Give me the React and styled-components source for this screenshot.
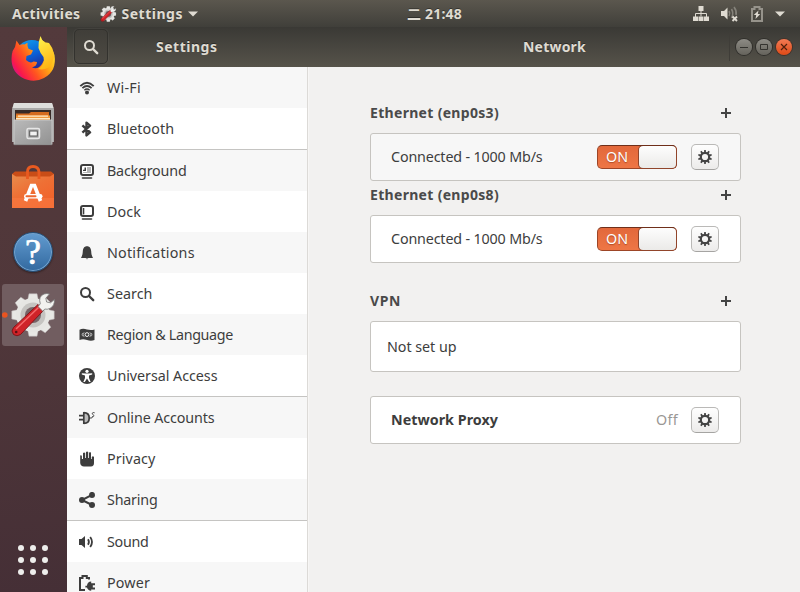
import React, { useLayoutEffect, useRef, useState } from "react";
import styled, { createGlobalStyle, css } from "styled-components";

const Global = createGlobalStyle`
  * { box-sizing: border-box; }
  html, body { margin: 0; padding: 0; overflow: hidden; }
  body { font-family: "Noto Sans", "Noto Sans CJK SC", sans-serif; font-size: 14.3px; color: #3d3d3d; }
`;

/* ---------- text with a set measure ---------- */
const Label = styled.span`
  display: inline-block;
  white-space: pre;
  line-height: 20px;
  flex: none;
`;

function Text({ width, children }) {
  const ref = useRef(null);
  const [spacing, setSpacing] = useState(0);
  useLayoutEffect(() => {
    const natural = ref.current.getBoundingClientRect().width;
    setSpacing((width - natural) / children.length);
  }, []);
  return (
    <Label ref={ref} style={{ letterSpacing: `${spacing}px` }}>
      {children}
    </Label>
  );
}

/* ---------- shell ---------- */
const Screen = styled.div`
  width: 800px;
  height: 592px;
  display: flex;
  flex-direction: column;
  overflow: hidden;
  background: #f2f1f0;
`;
const TopBar = styled.div`
  height: 27px;
  flex: none;
  display: grid;
  grid-template-columns: 395px auto 1fr;
  align-items: center;
  padding: 1px 12px 0 12px;
  background: linear-gradient(#5b574e, #403f3a);
  color: #dfdbd2;
  font-weight: 700;
  font-size: 14px;
  text-shadow: 0 -1px 0 rgba(0, 0, 0, 0.35);
`;
const BarSide = styled.div`
  display: flex;
  align-items: center;
  justify-content: ${(p) => (p.$end ? "flex-end" : "flex-start")};
`;
const AppMenu = styled.div`
  display: flex;
  align-items: center;
  margin-left: 19px;
  gap: 5px;
`;
const TrayIcons = styled.div`
  display: flex;
  align-items: center;
  gap: 12px;
  margin-right: 3px;
  svg { display: block; }
`;
const Body = styled.div`
  flex: 1;
  display: flex;
  min-height: 0;
`;
const Dock = styled.div`
  width: 67px;
  flex: none;
  display: flex;
  flex-direction: column;
  gap: 2px;
  padding: 1px 3px 0 2px;
  background: linear-gradient(175deg, #533a3c 0%, #50373a 50%, #452f36 100%);
`;
const DockItem = styled.div`
  height: 62px;
  flex: none;
  display: flex;
  border-radius: 3px;
  background: ${(p) => (p.$active ? "#715d60" : "transparent")};
  svg { display: block; overflow: visible; }
`;
const AppGrid = styled.div`
  margin: auto 0 17px 16px;
  display: grid;
  grid-template-columns: repeat(3, 6px);
  gap: 6px;
`;
const GridDot = styled.span`
  width: 6px;
  height: 6px;
  border-radius: 50%;
  background: #eeeeec;
`;

/* ---------- window ---------- */
const Window = styled.div`
  flex: 1;
  display: flex;
  flex-direction: column;
  min-width: 0;
`;
const HeaderBar = styled.div`
  height: 40px;
  flex: none;
  display: flex;
  padding-bottom: 1px;
  background: linear-gradient(#3a3935, #56534a);
  color: #dfdbd2;
  font-weight: 700;
  font-size: 14px;
  text-shadow: 0 -1px 0 rgba(0, 0, 0, 0.4);
`;
const HeaderLeft = styled.div`
  width: 241px;
  display: flex;
  align-items: center;
  padding-left: 7px;
`;
const SearchButton = styled.div`
  width: 34px;
  height: 35px;
  margin-right: 48px;
  display: flex;
  align-items: center;
  justify-content: center;
  border: 1px solid #33322e;
  border-radius: 5px;
  background: linear-gradient(#403e39, #4d4a43);
  box-shadow: 0 0 0 1px rgba(255, 255, 255, 0.04);
`;
const HeaderRight = styled.div`
  flex: 1;
  display: flex;
  align-items: center;
  padding-left: 215px;
`;
const WindowControls = styled.div`
  margin-left: auto;
  height: 28px;
  display: flex;
  align-items: center;
  gap: 4px;
  padding: 0 8px 0 6px;
  border-left: 1px solid #3f3d38;
`;
const ControlButton = styled.span`
  width: 16px;
  height: 16px;
  border-radius: 50%;
  display: flex;
  box-shadow: 0 0 0 1px ${(p) => (p.$close ? "#443229" : "#302f2b")};
  background: ${(p) =>
    p.$close ? "linear-gradient(#f37a54, #df4a16)" : "linear-gradient(#8d8b85, #65635c)"};
  svg { display: block; }
`;
const Panes = styled.div`
  flex: 1;
  display: flex;
  min-height: 0;
`;
const Sidebar = styled.div`
  width: 241px;
  flex: none;
  overflow: hidden;
  background: #fff;
  border-right: 1px solid #dcdad7;
`;
const SidebarRow = styled.div`
  height: 41px;
  display: flex;
  align-items: center;
  gap: 12px;
  padding: 1px 0 0 12px;
  background: ${(p) => (p.$shaded ? "#f7f7f7" : "#fff")};
  svg { display: block; flex: none; margin-top: -1px; }
  ${(p) =>
    p.$separated &&
    css`
      height: 42px;
      border-top: 1px solid #c5c4c2;
    `}
`;
const Content = styled.div`
  flex: 1;
  padding: 36px 59px 0 61px;
  border-left: 1px solid #f7f6f5;
  background: #f2f1f0;
`;
const Section = styled.section`
  margin-bottom: ${(p) => p.$gap}px;
`;
const SectionHead = styled.div`
  height: 20px;
  display: flex;
  align-items: center;
  justify-content: space-between;
  padding-right: 10px;
  margin-bottom: ${(p) => p.$gap}px;
  color: #4a4a4a;
  font-weight: 700;
  font-size: 14px;
  svg { display: block; }
`;
const Card = styled.div`
  height: ${(p) => p.$height || 48}px;
  display: flex;
  align-items: center;
  padding: 0 21px 0 ${(p) => p.$inset || 20}px;
  border: 1px solid #c6c4c0;
  border-radius: 3px;
  background: ${(p) => (p.$shaded ? "#f7f7f7" : "#fff")};
  font-weight: ${(p) => (p.$strong ? 700 : 400)};
`;
const CardEnd = styled.div`
  margin-left: auto;
  display: flex;
  align-items: center;
  gap: ${(p) => p.$gap}px;
`;
const Muted = styled.span`
  color: #9a9794;
  font-weight: 400;
`;
const Toggle = styled.div`
  width: 80px;
  height: 24px;
  display: flex;
  justify-content: space-between;
  align-items: center;
  padding-left: 8px;
  border: 1px solid #9d4526;
  border-top-color: #6f2f1a;
  border-radius: 5px;
  background: linear-gradient(#e2683b, #ee7645);
  color: #fff;
  text-shadow: 0 1px 1px rgba(120, 40, 10, 0.5);
`;
const Knob = styled.span`
  width: 39px;
  height: 24px;
  margin: -1px;
  border: 1px solid #91452b;
  border-top-color: #6f2f1a;
  border-radius: 5px;
  background: linear-gradient(#fdfdfd, #ebeae8);
`;
const GearButton = styled.div`
  width: 28px;
  height: 26px;
  display: flex;
  align-items: center;
  justify-content: center;
  border: 1px solid #bab9b7;
  border-bottom-color: #a5a4a2;
  border-radius: 5px;
  background: linear-gradient(#fefefe, #ecebea);
`;

/* ---------- icons ---------- */
const Sym = ({ size = 16, children, ...rest }) => (
  <svg width={size} height={size} viewBox="0 0 16 16" fill="#3d3d3d" {...rest}>
    {children}
  </svg>
);
const stroke = (w, c = "#3d3d3d") => ({ fill: "none", stroke: c, strokeWidth: w });

const SearchIcon = ({ color = "#3d3d3d" }) => (
  <Sym>
    <circle cx="6.5" cy="6.5" r="4.5" {...stroke(2, color)} />
    <path d="M10 10L14.2 14.2" strokeLinecap="round" {...stroke(2.4, color)} />
  </Sym>
);
const icons = {
  wifi: (
    <Sym>
      <path d="M1.3 6.1Q8 -.5 14.7 6.1" {...stroke(2)} />
      <path d="M3.4 8.2Q8 3.9 12.6 8.2" {...stroke(1.8)} />
      <path d="M5.4 10.2Q8 7.8 10.6 10.2" {...stroke(1.5)} />
      <circle cx="8" cy="12.6" r="2" />
    </Sym>
  ),
  bluetooth: (
    <Sym>
      <path d="M3.4 4.4L11 11.4L7.5 14.4V1.6L11 4.6L3.4 11.6" strokeLinejoin="round" {...stroke(2.4)} />
    </Sym>
  ),
  background: (
    <Sym>
      <rect x="2" y="2" width="12" height="10" rx="2" fill="#fff" stroke="#3d3d3d" strokeWidth="2" />
      <path d="M8 4h4v6H4V9h4z" fill="#b5b5b5" />
      <path d="M7 4.5V8H4V6.8H5.5V4.5z" />
      <path d="M3.5 15h9" strokeLinecap="round" {...stroke(1.6)} />
    </Sym>
  ),
  dock: (
    <Sym>
      <rect x="2" y="2" width="12" height="10" rx="2" fill="#fff" stroke="#3d3d3d" strokeWidth="2" />
      <path d="M4.5 4v6.4" {...stroke(1.6)} />
      <path d="M3.5 15h9" strokeLinecap="round" {...stroke(1.6)} />
    </Sym>
  ),
  bell: (
    <Sym>
      <path d="M8 1.2C5.1 1.2 4 3.5 3.8 6.2C3.6 9.3 3.2 11 2 13H14C12.8 11 12.4 9.3 12.2 6.2C12 3.5 10.9 1.2 8 1.2Z" />
      <path d="M6.6 13.6h2.8Q8 15 6.6 13.6z" />
    </Sym>
  ),
  search: <SearchIcon />,
  region: (
    <Sym>
      <path d="M.5 2.7Q4 1 8 2.6Q12 3.6 15.5 2.5V13Q12 14.5 8 13Q4 11.5 .5 13Z" />
      <circle cx="8" cy="7.6" r="1.9" {...stroke(1, "#f2f2f2")} />
      <path d="M5.2 5.2Q3 7.6 5.2 10M10.8 5.2Q13 7.6 10.8 10M3.6 6Q2.6 7.6 3.6 9.2M12.4 6Q13.4 7.6 12.4 9.2" {...stroke(0.7, "#d0d0d0")} />
    </Sym>
  ),
  access: (
    <Sym>
      <circle cx="8" cy="8" r="8" />
      <circle cx="8" cy="3.3" r="1.6" fill="#fff" />
      <path d="M2.8 5.2L6.5 5.6H9.5L13.2 5.2V6.5L10 7.4V10L11.7 14H10.2L8 10.4L5.8 14H4.3L6 10V7.4L2.8 6.5Z" fill="#fff" />
    </Sym>
  ),
  accounts: (
    <Sym>
      <path d="M4.8 2.2C8.4 2.2 10.7 4.6 10.7 8S8.4 13.8 4.8 13.8Z" fill="#bbb" />
      <path d="M4.8 2V14M4.8 2.6C8.2 2.6 10.2 4.8 10.2 8S8.2 13.4 4.8 13.4M0 5.7H4.8M0 9.7H4.8" {...stroke(1.7)} />
      <path d="M10.5 8h1.8q1 0 1-1.2M15.6 2.8C13.4 2 12.6 3.5 14 4.6C15.4 5.6 15 7 13 6.8" {...stroke(1)} />
    </Sym>
  ),
  privacy: (
    <Sym>
      <path d="M1.2 4.5Q2.7 3.8 2.9 5.4V8H4V2Q5.2 1 6.2 2V7H7V1Q8.1 0 9.2 1V7H10V1.6Q11.1 .7 12 1.6V8H12.8V6Q14 4.7 15 6V12Q15 15.4 12 15.4H5Q1.6 15.4 1.2 12Z" />
    </Sym>
  ),
  sharing: (
    <Sym>
      <path d="M13 2.9L3 8L13 13" {...stroke(2)} />
      <circle cx="13" cy="2.9" r="3" />
      <circle cx="3" cy="8" r="3" />
      <circle cx="13" cy="13" r="3" />
    </Sym>
  ),
  sound: (
    <Sym>
      <path d="M0 5H2.5L6 2V14L2.5 11H0Z" />
      <path d="M9 5.3Q10.8 8 9 10.7M11.2 3Q14.8 8 11.2 13" {...stroke(1.8)} />
    </Sym>
  ),
  power: (
    <Sym>
      <path d="M6 15H1V3H3.5V1H7.8V3H10V4.5" {...stroke(2)} />
      <path d="M8 10.7Q8.2 6.8 12.2 6.6V8.2H16V10.2H13.8V12.5H16V14.4H12.2V15.8Q8.8 15.7 8 12.6H6.4V10.7Z" />
    </Sym>
  ),
};

const GearIcon = () => (
  <Sym fill="#444">
    <circle cx="8" cy="8" r="4.2" {...stroke(2.2, "#444")} />
    {[0, 36, 72, 108, 144, 180, 216, 252, 288, 324].map((a) => (
      <path key={a} d="M7 4.2L7.2 1H8.8L9 4.2Z" transform={`rotate(${a} 8 8)`} />
    ))}
  </Sym>
);
const PlusIcon = () => (
  <svg width="10" height="10" viewBox="0 0 10 10">
    <path d="M5 0V10M0 5H10" {...stroke(2, "#444")} />
  </svg>
);
const CaretIcon = () => (
  <svg width="10" height="6" viewBox="0 0 10 6">
    <path d="M0 .5H10L5 5.5Z" fill="#dfdbd2" />
  </svg>
);

const teeth = [0, 45, 90, 135, 180, 225, 270, 315];
const ToolArt = () => (
  <>
    {teeth.map((a) => (
      <path key={a} d="M25.6 16.5L27 9.8H35L36.4 16.5Z" transform={`rotate(${a} 31 31)`} fill="#e8e8e5" stroke="#bdb9b8" strokeWidth=".5" />
    ))}
    <circle cx="31" cy="31" r="17" fill="#e6e6e3" />
    <circle cx="31" cy="31" r="12.5" fill="#c5c4c1" />
    <circle cx="31" cy="31" r="8" fill="#776568" />
    <path d="M11.5 43.5L36 20.5L41.5 26.5L18.5 50.5Q15 53 11.5 50.5Q8.5 47 11.5 43.5Z" fill="#cf2328" stroke="#7a1115" strokeWidth=".9" />
    <path d="M14 45L36.5 23.5" stroke="#f4696a" strokeWidth="1.5" fill="none" />
    <circle cx="14.2" cy="48" r="1.3" fill="#591013" />
    <path d="M36 22.5L38.3 19.8Q36 12.5 42 10Q45 9 47.5 10L43.8 14.2L44.6 18L48.5 18.8L52.4 15.5Q53 21.5 48 24.4Q45 25.8 42.8 25L40.8 27.2Z" fill="#f2f2ef" stroke="#777" strokeWidth=".8" />
  </>
);

const HelpDisc = styled.span`
  width: 40px;
  height: 40px;
  margin: 12px auto 0;
  border-radius: 50%;
  border: 1px solid #275078;
  box-shadow: inset 0 0 0 1px #76a4ce, 0 1px 2px rgba(0, 0, 0, 0.4);
  background: linear-gradient(#629bd0, #32699f);
  display: flex;
  align-items: center;
  justify-content: center;
  color: #fff;
  font: 400 36px/38px "Liberation Serif", serif;
  -webkit-text-stroke: 0.7px #fff;
`;

const dockIcons = {
  firefox: (
    <svg width="62" height="62" viewBox="0 0 62 62">
      <defs>
        <linearGradient id="ffBody" x1="1" y1=".15" x2="0" y2=".8">
          <stop offset="0" stopColor="#fff13a" />
          <stop offset=".35" stopColor="#ffab14" />
          <stop offset=".62" stopColor="#ff5420" />
          <stop offset=".85" stopColor="#f9194c" />
          <stop offset="1" stopColor="#c412a0" />
        </linearGradient>
        <linearGradient id="ffBlue" x1="0" y1="0" x2=".4" y2="1">
          <stop offset="0" stopColor="#12a5ee" />
          <stop offset=".55" stopColor="#0a5fd6" />
          <stop offset="1" stopColor="#27228a" />
        </linearGradient>
        <linearGradient id="ffTail" x1="0" y1="0" x2=".3" y2="1">
          <stop offset="0" stopColor="#fff44f" />
          <stop offset="1" stopColor="#ffb716" />
        </linearGradient>
      </defs>
      <circle cx="30" cy="29" r="17" fill="url(#ffBlue)" />
      <path d="M14.5 12.5L17.5 17Q20.5 16 22.5 16.5L25.5 14.8Q25 18 26.5 20.8L31 22.5L29 26.5L24.5 28L24 32Q28 36 31.5 33.5L35 34Q35 38 30 39.5Q36 42 40 36Q45 29 41.5 21L38 11Q50 17 52.5 27Q55 43 42 50Q31 56 19 49Q8 42 9.8 27Q10.5 22 13 19Z" fill="url(#ffBody)" />
      <path d="M38.5 8Q36 14 36.5 20Q38 25 41.5 29Q43.5 37 36 41Q46 43 50 35Q55 25 47 15Q44 14 43 15Q39.5 12 38.5 8Z" fill="url(#ffTail)" />
    </svg>
  ),
  files: (
    <svg width="62" height="62" viewBox="0 0 62 62">
      <defs>
        <linearGradient id="cab" x1="0" y1="0" x2="1" y2="1">
          <stop offset="0" stopColor="#bababa" />
          <stop offset="1" stopColor="#929292" />
        </linearGradient>
      </defs>
      <path d="M12 11H50L52 17V50H10V17Z" fill="#aaa9a8" />
      <path d="M12 11H50L51.5 16H10.5Z" fill="#dededc" />
      <rect x="13" y="18" width="36" height="10" fill="#382b27" />
      <path d="M14 21.5H27L29 20H47V28H14Z" fill="#d66b1e" />
      <path d="M14 23.5H48V28H14Z" fill="#f29a3e" />
      <path d="M16 24.2H46M14 26.6H48" stroke="#ffe9c6" strokeWidth="1.2" />
      <path d="M12 28H50V52.5H12Z" fill="url(#cab)" stroke="#d1d1d0" strokeWidth=".8" />
      <path d="M12 52.7H50" stroke="#777" strokeWidth=".8" />
      <rect x="25" y="36.5" width="12.5" height="10" rx="1.5" fill="#aaa" stroke="#e6e6e6" strokeWidth="1.5" />
      <rect x="27.7" y="39" width="7.6" height="5" fill="#f2f2f2" stroke="#555" strokeWidth="1" />
    </svg>
  ),
  software: (
    <svg width="62" height="62" viewBox="0 0 62 62">
      <defs>
        <linearGradient id="bag" x1="0" y1="0" x2=".7" y2="1">
          <stop offset="0" stopColor="#e88d4d" />
          <stop offset=".5" stopColor="#ee7035" />
          <stop offset="1" stopColor="#f2622a" />
        </linearGradient>
      </defs>
      <path d="M10 18L13 15.5H49L52 18V24H10Z" fill="#c94d17" />
      <path d="M10 18L14 20.5H48L52 18V52H10Z" fill="url(#bag)" />
      <path d="M10 42H52V52H10Z" fill="#f97a43" opacity=".6" />
      <path d="M25.5 23V16Q25.5 10.5 31 10.5T37 16V23" {...stroke(2.8, "#e95a20")} />
      <path d="M23.5 45L29.5 29.5H32.5L38.5 45" {...stroke(3.7, "#fff")} />
      <rect x="22" y="38" width="18.5" height="4.5" rx="2.2" fill="#fff" />
      <rect x="23.5" y="39.3" width="11" height="2" rx="1" fill="#ed6930" />
    </svg>
  ),
  help: <HelpDisc>?</HelpDisc>,
  settings: (
    <svg width="62" height="62" viewBox="0 0 62 62">
      <circle cx="2.8" cy="31" r="2.8" fill="#ea5420" />
      <ToolArt />
    </svg>
  ),
};

/* ---------- data ---------- */
const sidebar = [
  ["wifi", "Wi-Fi", 34],
  ["bluetooth", "Bluetooth", 67.3],
  ["background", "Background", 79.5, true],
  ["dock", "Dock", 34],
  ["bell", "Notifications", 87.7],
  ["search", "Search", 45.5],
  ["region", "Region & Language", 126],
  ["access", "Universal Access", 110.5],
  ["accounts", "Online Accounts", 107.5, true],
  ["privacy", "Privacy", 48.5],
  ["sharing", "Sharing", 50.5],
  ["sound", "Sound", 41.5, true],
  ["power", "Power", 43],
];

function Wired({ name, shaded, gap }) {
  return (
    <Section $gap={gap}>
      <SectionHead $gap={10}>
        <Text width={129}>{name}</Text>
        <PlusIcon />
      </SectionHead>
      <Card $shaded={shaded}>
        <Text width={151.5}>Connected - 1000 Mb/s</Text>
        <CardEnd $gap={14}>
          <Toggle>
            <Text width={22}>ON</Text>
            <Knob />
          </Toggle>
          <GearButton><GearIcon /></GearButton>
        </CardEnd>
      </Card>
    </Section>
  );
}

export default function App() {
  return (
    <Screen>
      <Global />
      <TopBar>
        <BarSide>
          <Text width={68.5}>Activities</Text>
          <AppMenu>
            <svg width="17" height="17" viewBox="8 9 47 47"><ToolArt /></svg>
            <Text width={61.5}>Settings</Text>
            <CaretIcon />
          </AppMenu>
        </BarSide>
        <Text width={55}>二 21:48</Text>
        <BarSide $end>
          <TrayIcons>
            <svg width="16" height="16" viewBox="0 0 16 16" fill="#dfdbd2">
              <path d="M5.5 0h5v5h-5zM0 10.5h5V15H0zM5.5 10.5h5V15h-5zM11 10.5h5V15h-5z" />
              <path d="M8 5V10.5M2.5 11V7.5H13.5V11" {...stroke(1, "#dfdbd2")} />
            </svg>
            <svg width="18" height="16" viewBox="0 0 18 16">
              <path d="M0 5H3L6.5 1.5V13.5L3 10H0Z" fill="#dfdbd2" />
              <path d="M8 5Q9.5 7.5 8 10M10.5 3Q13 7.5 10.5 12M13 1Q16 5 15 9" {...stroke(1.6, "#85827a")} />
              <path d="M11.5 10.5L16 15M16 10.5L11.5 15" {...stroke(1.9, "#dfdbd2")} />
            </svg>
            <svg width="12" height="16" viewBox="0 0 12 16">
              <path d="M1 3H3.5V1H8.5V3H11V15H1Z" {...stroke(2, "#96938b")} />
              <path d="M7.5 4.5L2.8 9H5.2L4.5 13L9.2 8H6.8Z" fill="#dfdbd2" />
            </svg>
            <CaretIcon />
          </TrayIcons>
        </BarSide>
      </TopBar>
      <Body>
        <Dock>
          {Object.entries(dockIcons).map(([name, art]) => (
            <DockItem key={name} $active={name === "settings"}>{art}</DockItem>
          ))}
          <AppGrid>
            {Array.from({ length: 9 }, (_, i) => <GridDot key={i} />)}
          </AppGrid>
        </Dock>
        <Window>
          <HeaderBar>
            <HeaderLeft>
              <SearchButton><SearchIcon color="#dfdbd2" /></SearchButton>
              <Text width={61.5}>Settings</Text>
            </HeaderLeft>
            <HeaderRight>
              <Text width={63}>Network</Text>
              <WindowControls>
                <ControlButton>
                  <svg width="16" height="16"><path d="M4 8.5H12" {...stroke(1, "#34332f")} /></svg>
                </ControlButton>
                <ControlButton>
                  <svg width="16" height="16"><path d="M4.5 5.5H11.5V10.5H4.5Z" {...stroke(1, "#34332f")} /></svg>
                </ControlButton>
                <ControlButton $close>
                  <svg width="16" height="16"><path d="M5 5L11 11M11 5L5 11" {...stroke(1.2, "#51200d")} /></svg>
                </ControlButton>
              </WindowControls>
            </HeaderRight>
          </HeaderBar>
          <Panes>
            <Sidebar>
              {sidebar.map(([icon, label, width, separated], i) => (
                <SidebarRow key={label} $shaded={i % 2 === 0} $separated={separated}>
                  {icons[icon]}
                  <Text width={width}>{label}</Text>
                </SidebarRow>
              ))}
            </Sidebar>
            <Content>
              <Wired name="Ethernet (enp0s3)" shaded gap={4} />
              <Wired name="Ethernet (enp0s8)" gap={28} />
              <Section $gap={24}>
                <SectionHead $gap={10}>
                  <Text width={31}>VPN</Text>
                  <PlusIcon />
                </SectionHead>
                <Card $height={51} $inset={16}>
                  <Text width={69.5}>Not set up</Text>
                </Card>
              </Section>
              <Card $strong>
                <Text width={107}>Network Proxy</Text>
                <CardEnd $gap={13}>
                  <Muted><Text width={22}>Off</Text></Muted>
                  <GearButton><GearIcon /></GearButton>
                </CardEnd>
              </Card>
            </Content>
          </Panes>
        </Window>
      </Body>
    </Screen>
  );
}
